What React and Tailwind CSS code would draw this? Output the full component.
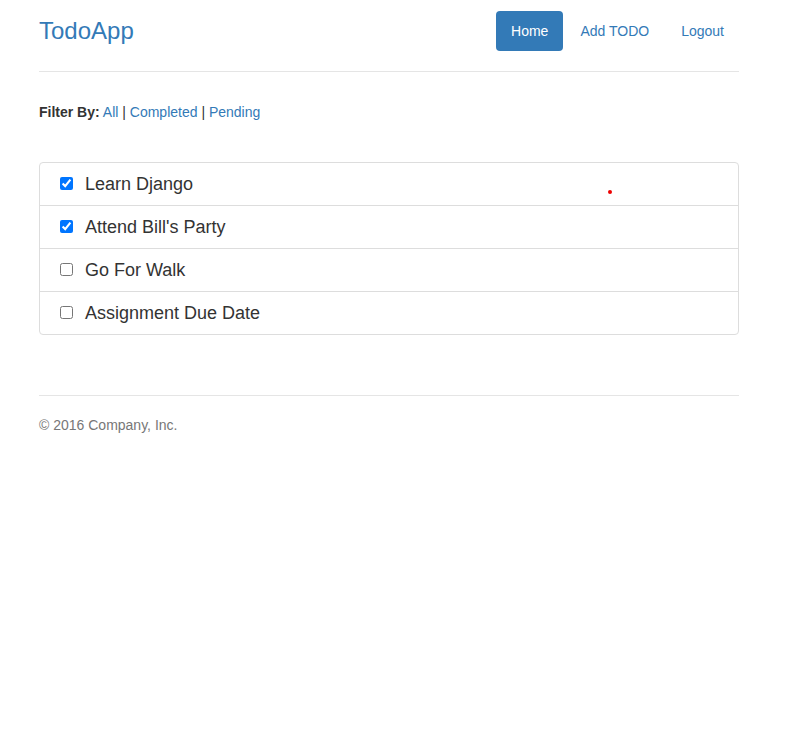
import React from "react";

const todos = [
  { text: "Learn Django", done: true },
  { text: "Attend Bill's Party", done: true },
  { text: "Go For Walk", done: false },
  { text: "Assignment Due Date", done: false },
];

export default function App() {
  return (
    <div className="min-h-[746px] bg-white text-[#333] text-[14px] leading-[20px]" style={{ fontFamily: '"Liberation Sans", Arial, sans-serif' }}>
      <div className="w-[700px] ml-[39px]">
        <header className="flex items-center justify-between pt-[11px] pb-[20px] border-b border-[#e5e5e5]">
          <h3 className="text-[24px] leading-[40px] text-[#337ab7]">TodoApp</h3>
          <nav className="flex gap-[2px]">
            <a className="block px-[15px] py-[10px] rounded-[4px] bg-[#337ab7] text-white">Home</a>
            <a className="block px-[15px] py-[10px] rounded-[4px] text-[#337ab7]">Add TODO</a>
            <a className="block px-[15px] py-[10px] rounded-[4px] text-[#337ab7]">Logout</a>
          </nav>
        </header>

        <p className="mt-[30px]">
          <b>Filter By:</b> <a className="text-[#337ab7]">All</a> | <a className="text-[#337ab7]">Completed</a> | <a className="text-[#337ab7]">Pending</a>
        </p>

        <ul className="mt-[40px] border border-[#ddd] rounded-[4px]">
          {todos.map((t, i) => (
            <li key={i} className={`relative flex items-center pl-[20px] py-[10px] text-[18px] leading-[22px] ${i > 0 ? "border-t border-[#ddd]" : ""}`}>
              <input type="checkbox" defaultChecked={t.done} className="w-[13px] h-[13px] m-0 relative -top-px" />
              <span className="ml-[12px]">{t.text}</span>
              {i === 0 && <span className="absolute left-[568px] top-[27px] w-[4px] h-[4px] rounded-full bg-[#e00]" />}
            </li>
          ))}
        </ul>

        <footer className="mt-[60px] border-t border-[#e5e5e5] pt-[19px] text-[#777]">
          <p>© 2016 Company, Inc.</p>
        </footer>
      </div>
    </div>
  );
}
